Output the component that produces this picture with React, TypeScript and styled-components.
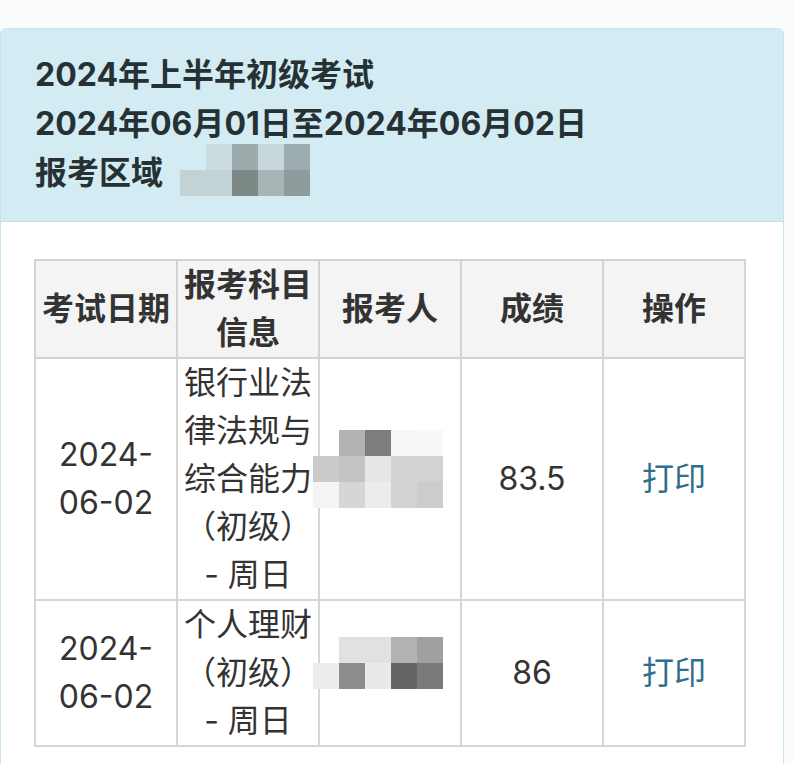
import React from "react";
import styled, { createGlobalStyle } from "styled-components";

const GlobalStyle = createGlobalStyle`
  html, body {
    margin: 0;
    padding: 0;
    background: #fbfdfd;
  }
  body {
    font-family: Inter, "Noto Sans CJK SC", sans-serif;
    color: #333;
    overflow: hidden;
  }
`;

const Page = styled.div`
  padding-top: 28px;
  width: 794px;
  height: 764px;
  box-sizing: border-box;
`;

const Card = styled.section`
  width: 784px;
  min-height: 760px;
  box-sizing: border-box;
  background: #ffffff;
  border: 1px solid #c7e3eb;
  border-radius: 6px 6px 0 0;
  overflow: hidden;
`;

const Heading = styled.header`
  background: #d3ebf2;
  border-bottom: 1px solid #c4e0e8;
  padding: 21px 20px 24px 34px;
  color: #263134;
  font-size: 32px;
  font-weight: 700;
  line-height: 49px;
`;

const HeadingLine = styled.div`
  display: flex;
  align-items: center;
  white-space: nowrap;
`;

const Body = styled.div`
  padding: 37px 37px 30px 33px;
`;

const Table = styled.table`
  width: 712px;
  table-layout: fixed;
  border-collapse: collapse;
  font-size: 32px;
  line-height: 48px;
  text-align: center;
`;

const Col = styled.col`
  width: 20%;
`;

const Th = styled.th`
  background: #f4f4f4;
  border: 2px solid #d3d3d3;
  padding: 0 4px;
  font-weight: 700;
  color: #333;
  vertical-align: middle;
`;

const Td = styled.td<{ $relative?: boolean }>`
  border: 2px solid #d6d6d6;
  padding: 0 4px;
  font-weight: 400;
  color: #333;
  vertical-align: middle;
  position: ${(p) => (p.$relative ? "relative" : "static")};
`;

const PrintLink = styled.a`
  color: #2f6e8c;
  text-decoration: none;
  cursor: pointer;
`;

const OverlayMosaic = styled.svg`
  position: absolute;
  left: -7px;
  top: 50%;
  transform: translateY(-50%);
  margin-top: -10px;
  display: block;
`;

const InlineMosaic = styled.svg`
  display: block;
  margin-left: 17px;
  margin-top: -6px;
`;

type Grid = (string | null)[][];

const CELL = 26;

function MosaicRects({ grid }: { grid: Grid }) {
  return (
    <>
      {grid.map((row, r) =>
        row.map((c, i) =>
          c ? (
            <rect
              key={`${r}-${i}`}
              x={i * CELL}
              y={r * CELL}
              width={CELL}
              height={CELL}
              fill={c}
            />
          ) : null
        )
      )}
    </>
  );
}

const areaGrid: Grid = [
  [null, "#cbdde1", "#9eabad", "#c8d7d9", "#9dacae"],
  ["#c2d3d6", "#c2d3d6", "#7d8987", "#a8b5b6", "#8e9c9e"],
];

const person1: Grid = [
  [null, "#b3b3b3", "#7d7d7d", "#f6f6f6", "#f8f8f8"],
  ["#cacaca", "#c4c4c4", "#e7e7e7", "#d3d3d3", "#d2d2d2"],
  ["#f4f4f4", "#d6d6d6", "#ececec", "#d3d3d3", "#cccccc"],
];

const person2: Grid = [
  [null, "#e1e1e1", "#e1e1e1", "#b2b2b2", "#a0a0a0"],
  ["#ececec", "#8d8d8d", "#e9e9e9", "#656565", "#7a7a7a"],
];

function Overlay({ grid }: { grid: Grid }) {
  const w = grid[0].length * CELL;
  const h = grid.length * CELL;
  return (
    <OverlayMosaic width={w} height={h} viewBox={`0 0 ${w} ${h}`} aria-hidden>
      <MosaicRects grid={grid} />
    </OverlayMosaic>
  );
}

type Row = {
  date: string;
  subject: React.ReactNode;
  mosaic: Grid;
  score: string;
};

const rows: Row[] = [
  {
    date: "2024-06-02",
    subject: (
      <>
        银行业法
        <br />
        律法规与
        <br />
        综合能力
        <br />
        （初级）
        <br />
        - 周日
      </>
    ),
    mosaic: person1,
    score: "83.5",
  },
  {
    date: "2024-06-02",
    subject: (
      <>
        个人理财
        <br />
        （初级）
        <br />
        - 周日
      </>
    ),
    mosaic: person2,
    score: "86",
  },
];

export default function App() {
  return (
    <Page>
      <GlobalStyle />
      <Card>
        <Heading>
          <HeadingLine>2024年上半年初级考试</HeadingLine>
          <HeadingLine>2024年06月01日至2024年06月02日</HeadingLine>
          <HeadingLine>
            报考区域
            <InlineMosaic width={130} height={52} viewBox="0 0 130 52" aria-hidden>
              <MosaicRects grid={areaGrid} />
            </InlineMosaic>
          </HeadingLine>
        </Heading>
        <Body>
          <Table>
            <colgroup>
              <Col />
              <Col />
              <Col />
              <Col />
              <Col />
            </colgroup>
            <thead>
              <tr>
                <Th>考试日期</Th>
                <Th>
                  报考科目
                  <br />
                  信息
                </Th>
                <Th>报考人</Th>
                <Th>成绩</Th>
                <Th>操作</Th>
              </tr>
            </thead>
            <tbody>
              {rows.map((r, i) => (
                <tr key={i}>
                  <Td>
                    2024-
                    <br />
                    06-02
                  </Td>
                  <Td>{r.subject}</Td>
                  <Td $relative>
                    <Overlay grid={r.mosaic} />
                  </Td>
                  <Td>{r.score}</Td>
                  <Td>
                    <PrintLink>打印</PrintLink>
                  </Td>
                </tr>
              ))}
            </tbody>
          </Table>
        </Body>
      </Card>
    </Page>
  );
}
